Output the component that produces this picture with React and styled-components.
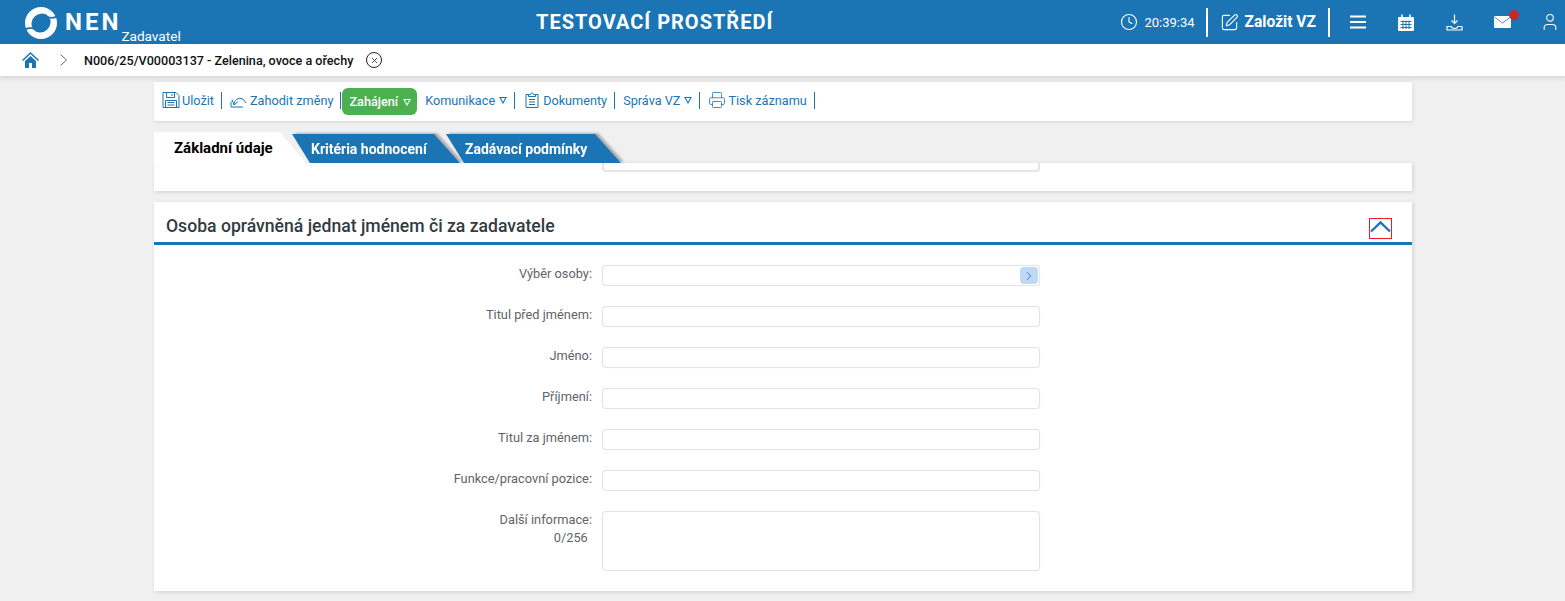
import React from "react"
import styled, { createGlobalStyle } from "styled-components"
import { Clock, SquarePen, User, ChevronRight, X, Printer } from "lucide-react"

const blue = "#1b75b4"

const Global = createGlobalStyle`
  html, body { margin: 0; padding: 0; background: #f0f0f0; }
  body { font-family: Roboto, "Liberation Sans", sans-serif; overflow: hidden; }
`

const Page = styled.div`
  width: 1565px;
  height: 601px;
  overflow: hidden;
`
const Header = styled.header`
  height: 44px;
  background: ${blue};
  display: grid;
  grid-template-columns: 536px auto 1fr;
  align-items: center;
  color: #fff;
`
const Brand = styled.div`
  display: flex;
  align-items: flex-start;
  height: 44px;
  padding-left: 25px;
`
const BrandMark = styled.svg`
  width: 32px;
  height: 32px;
  margin-top: 7px;
`
const BrandName = styled.span`
  font-size: 24px;
  font-weight: 700;
  letter-spacing: 3px;
  margin: 8px 0 0 8px;
  line-height: 28px;
`
const BrandRole = styled.span`
  font-size: 13.6px;
  line-height: 16px;
  margin: 28px 0 0 0;
`
const Title = styled.div`
  font-size: 20px;
  font-weight: 700;
  letter-spacing: 1px;
`
const HeaderRight = styled.div`
  display: flex;
  align-items: center;
  justify-content: flex-end;
  height: 44px;
  padding-right: 5px;
`
const Time = styled.span`
  display: flex;
  align-items: center;
  gap: 6px;
  font-size: 13px;
  padding-right: 11px;
`
const Found = styled.span`
  display: flex;
  align-items: center;
  gap: 6px;
  height: 29px;
  padding: 0 12px;
  border-left: 2px solid #fff;
  border-right: 2px solid #fff;
  font-size: 15.6px;
  font-weight: 700;
`
const HeaderIcons = styled.div`
  display: flex;
  align-items: center;
  gap: 28px;
  margin-left: 18px;
`
const IconSlot = styled.span`
  position: relative;
  display: flex;
  width: 20px;
  justify-content: center;
`
const Dot = styled.i`
  position: absolute;
  top: -6px;
  right: -7px;
  width: 10px;
  height: 10px;
  border-radius: 50%;
  background: #c62828;
`
const Crumbs = styled.nav`
  height: 32px;
  background: #fff;
  display: flex;
  align-items: center;
  padding-left: 22px;
  box-shadow: 0 2px 5px rgba(0, 0, 0, 0.12);
  position: relative;
  font-size: 12.6px;
  font-weight: 500;
  color: #111;
`
const CrumbArrow = styled.svg`
  margin-left: 20px;
`
const CrumbText = styled.span`
  margin-left: 16px;
`
const CloseBadge = styled.span`
  width: 14px;
  height: 14px;
  margin-left: 13px;
  border: 1px solid #222;
  border-radius: 50%;
  display: flex;
  align-items: center;
  justify-content: center;
`
const Content = styled.main`
  width: 1258px;
  margin: 6px 0 0 154px;
`
const Toolbar = styled.div`
  height: 40px;
  background: #fff;
  display: flex;
  align-items: center;
  padding: 0 0 3px 8px;
  border-bottom: 1px solid #ddd;
  box-shadow: 1px 0 4px rgba(0, 0, 0, 0.08);
  box-sizing: border-box;
`
const Tool = styled.span`
  display: flex;
  align-items: center;
  gap: 2px;
  height: 17px;
  font-size: 12.7px;
  color: ${blue};
  padding-right: 7px;
  margin-right: ${(p) => p.$gap ?? 8}px;
  border-right: 1px solid ${blue};
`
const StartButton = styled.span`
  display: flex;
  align-items: center;
  gap: 3px;
  height: 27px;
  padding: 0 6px 0 7px;
  margin: 3px 8px 0 1px;
  border-radius: 6px;
  background: #4caf50;
  color: #fff;
  font-size: 12.7px;
  font-weight: 500;
`
const Tri = styled.svg`
  width: 8px;
  height: 8px;
  margin-left: 2px;
`
const Tabs = styled.div`
  display: flex;
  height: 31px;
  margin-top: 10px;
`
const ActiveTab = styled.div`
  width: 152px;
  height: 31px;
  margin-right: -14px;
  background: #fff;
  clip-path: polygon(0 0, 126px 0, 152px 31px, 0 31px);
  display: flex;
  align-items: center;
  padding-left: 20px;
  box-sizing: border-box;
  font-size: 15px;
  font-weight: 700;
  color: #000;
`
const TabShade = styled.div`
  width: ${(p) => p.$w}px;
  height: 29px;
  margin: 2px -${(p) => p.$over}px 0 0;
  filter: drop-shadow(3px -1px 1px rgba(0, 0, 0, 0.28));
`
const TabBody = styled.div`
  height: 29px;
  background: ${blue};
  color: #fff;
  clip-path: polygon(0 0, calc(100% - 26px) 0, 100% 100%, 18px 100%);
  display: flex;
  align-items: center;
  padding-left: 19px;
  font-size: 14px;
  font-weight: 700;
`
const StubPanel = styled.section`
  height: 28px;
  background: #fff;
  padding-left: 448px;
  box-shadow: 1px 1px 4px rgba(0, 0, 0, 0.14);
`
const StubField = styled.div`
  width: 434px;
  height: 7px;
  border: 2px solid #e6e6e6;
  border-top: none;
  border-radius: 0 0 4px 4px;
`
const Section = styled.section`
  margin-top: 11px;
  height: 389px;
  background: #fff;
  box-shadow: 1px 1px 4px rgba(0, 0, 0, 0.14);
`
const SectionHead = styled.div`
  height: 43px;
  box-sizing: border-box;
  border-bottom: 3px solid ${blue};
  display: flex;
  align-items: flex-end;
  justify-content: space-between;
  padding: 0 20px 3px 12px;
`
const SectionTitle = styled.h2`
  margin: 0 0 1px;
  font-size: 17.6px;
  line-height: 24px;
  font-weight: 500;
  color: #333b42;
`
const Toggle = styled.span`
  width: 23px;
  height: 21px;
  box-sizing: border-box;
  border: 1px solid #ed1c24;
  display: block;
  flex: none;
`
const ToggleArrow = styled.svg`
  display: block;
  width: 21px;
  height: 19px;
`
const Form = styled.div`
  display: grid;
  grid-template-columns: 438px 438px;
  column-gap: 10px;
  row-gap: 20px;
  padding-top: 20px;
`
const Label = styled.label`
  text-align: right;
  font-size: 12.8px;
  line-height: 17px;
  color: #5f6368;
`
const Counter = styled.div`
  padding-right: 1px;
  margin-top: 1px;
`
const Field = styled.div`
  position: relative;
  height: ${(p) => p.$h || 21}px;
  box-sizing: border-box;
  border: 1px solid #e3e3e3;
  border-radius: 4px;
  box-shadow: 0 0 1px #e8e8e8;
  background: #fff;
`
const Pick = styled.span`
  position: absolute;
  top: 1px;
  right: 1px;
  width: 18px;
  height: 17px;
  border-radius: 4px;
  background: #bfd8f5;
  display: flex;
  align-items: center;
  justify-content: center;
  color: #2a5fb0;
`

const Triangle = ({ color }) => (
  <Tri viewBox="0 0 8 8">
    <path d="M1 1.500h6L4 7z" fill="none" stroke={color} strokeWidth="1.1" />
  </Tri>
)

const Logo = () => (
  <BrandMark viewBox="0 0 32 32">
    <circle cx="16" cy="16" r="16" fill="#fff" />
    <ellipse cx="16" cy="16" rx="10" ry="9" fill={blue} transform="rotate(-40 16 16)" />
    <path d="M33 7.500C30 10 27 10.500 23 9.500l1.500 2c4 .5 7-.5 9-2z" fill={blue} />
    <path d="M-1 24.500C2 22 5 21.500 9 22.500l-1.500-2c-4-.5-7 .5-9 2z" fill={blue} />
  </BrandMark>
)

const ToolIcon = ({ children }) => (
  <svg width="18" height="18" viewBox="0 0 18 18" fill="none" stroke={blue} strokeWidth="1" strokeLinejoin="round">
    {children}
  </svg>
)

const fields = [
  { label: "Výběr osoby:", pick: true },
  { label: "Titul před jménem:" },
  { label: "Jméno:" },
  { label: "Příjmení:" },
  { label: "Titul za jménem:" },
  { label: "Funkce/pracovní pozice:" },
]

export default function App() {
  return (
    <Page>
      <Global />
      <Header>
        <Brand>
          <Logo />
          <BrandName>NEN</BrandName>
          <BrandRole>Zadavatel</BrandRole>
        </Brand>
        <Title>TESTOVACÍ PROSTŘEDÍ</Title>
        <HeaderRight>
          <Time>
            <Clock size={18} strokeWidth={1.5} />
            20:39:34
          </Time>
          <Found>
            <SquarePen size={19} strokeWidth={1.4} />
            Založit VZ
          </Found>
          <HeaderIcons>
            <IconSlot>
              <svg width="16" height="14" viewBox="0 0 16 14">
                <path d="M0 1.500h16M0 7h16M0 12.500h16" stroke="#fff" strokeWidth="2" />
              </svg>
            </IconSlot>
            <IconSlot>
              <svg width="16" height="17" viewBox="0 0 16 17">
                <path d="M1 3h14a1 1 0 0 1 1 1v12a1 1 0 0 1-1 1H1a1 1 0 0 1-1-1V4a1 1 0 0 1 1-1z" fill="#fff" />
                <path d="M4 0.500v3M12 0.500v3" stroke="#fff" strokeWidth="1.6" />
                <path d="M2.500 7.500h11M2.500 10.500h11M2.500 13.500h11M5 6.500v8.500M8 6.500v8.500M11 6.500v8.500" stroke={blue} strokeWidth="1" />
              </svg>
            </IconSlot>
            <IconSlot>
              <svg width="17" height="17" viewBox="0 0 17 17" fill="none" stroke="#fff" strokeWidth="1.2">
                <path d="M8.500 0.500v9M5.500 6.500l3 3 3-3" />
                <path d="M1 12.500h4c.5 1.500 1.500 2 3.500 2s3-.5 3.500-2h4v3.500H1z" strokeLinejoin="round" />
              </svg>
            </IconSlot>
            <IconSlot>
              <svg width="17" height="12" viewBox="0 0 17 12">
                <rect width="17" height="12" rx="1" fill="#fff" />
                <path d="M0.500 1l8 6 8-6" fill="none" stroke={blue} strokeWidth="0.8" />
              </svg>
              <Dot />
            </IconSlot>
            <IconSlot>
              <User size={22} strokeWidth={1.3} />
            </IconSlot>
          </HeaderIcons>
        </HeaderRight>
      </Header>
      <Crumbs>
        <svg width="17" height="16" viewBox="0 0 17 16">
          <path d="M8.500 0L0 8l1 1 7.500-7 7.500 7 1-1z" fill={blue} />
          <path d="M3 9l5.500-5 5.500 5v7h-4v-5H7v5H3z" fill={blue} />
        </svg>
        <CrumbArrow width="9" height="14" viewBox="0 0 9 14">
          <path d="M1.500 1.500l6 5.500-6 5.500" fill="none" stroke="#666" strokeWidth="1" />
        </CrumbArrow>
        <CrumbText>N006/25/V00003137 - Zelenina, ovoce a ořechy</CrumbText>
        <CloseBadge>
          <X size={9} strokeWidth={2} />
        </CloseBadge>
      </Crumbs>
      <Content>
        <Toolbar>
          <Tool>
            <ToolIcon>
              <path d="M1 1.500h13l3 3v12H1z" />
              <path d="M4.500 1.500v5h8v-5M10 3v2" />
              <path d="M3.500 16.500v-7h11v7M5.500 11.500h7M5.500 14h7" />
            </ToolIcon>
            Uložit
          </Tool>
          <Tool $gap={0}>
            <ToolIcon>
              <path d="M1 10.500v5.500h12" />
              <path d="M4 14c0-5 4-8 9-6l3 4" />
              <path d="M2 8.500l2 5.500 4-3.500" />
            </ToolIcon>
            Zahodit změny
          </Tool>
          <StartButton>
            Zahájení
            <Triangle color="#fff" />
          </StartButton>
          <Tool>
            Komunikace
            <Triangle color={blue} />
          </Tool>
          <Tool>
            <ToolIcon>
              <path d="M5.500 3.500H3v13h12v-13h-2.500" />
              <path d="M5.500 5.500v-2h2c0-2 3-2 3 0h2v2z" />
              <path d="M6 8.500h6M6 11h6M6 13.500h6" />
            </ToolIcon>
            Dokumenty
          </Tool>
          <Tool>
            Správa VZ
            <Triangle color={blue} />
          </Tool>
          <Tool>
            <Printer size={18} strokeWidth={1.05} />
            Tisk záznamu
          </Tool>
        </Toolbar>
        <Tabs>
          <ActiveTab>Základní údaje</ActiveTab>
          <TabShade $w={168} $over={14}>
            <TabBody>Kritéria hodnocení</TabBody>
          </TabShade>
          <TabShade $w={175} $over={0}>
            <TabBody>Zadávací podmínky</TabBody>
          </TabShade>
        </Tabs>
        <StubPanel>
          <StubField />
        </StubPanel>
        <Section>
          <SectionHead>
            <SectionTitle>Osoba oprávněná jednat jménem či za zadavatele</SectionTitle>
            <Toggle>
              <ToggleArrow viewBox="0 0 21 19">
                <path d="M1 12.500l9.500-9 9.500 9" fill="none" stroke={blue} strokeWidth="2.400" />
              </ToggleArrow>
            </Toggle>
          </SectionHead>
          <Form>
            {fields.map((f) => (
              <React.Fragment key={f.label}>
                <Label>{f.label}</Label>
                <Field>
                  {f.pick && (
                    <Pick>
                      <ChevronRight size={14} strokeWidth={1.4} />
                    </Pick>
                  )}
                </Field>
              </React.Fragment>
            ))}
            <Label>
              Další informace:
              <Counter>0/256&nbsp;</Counter>
            </Label>
            <Field $h={60} />
          </Form>
        </Section>
      </Content>
    </Page>
  )
}
